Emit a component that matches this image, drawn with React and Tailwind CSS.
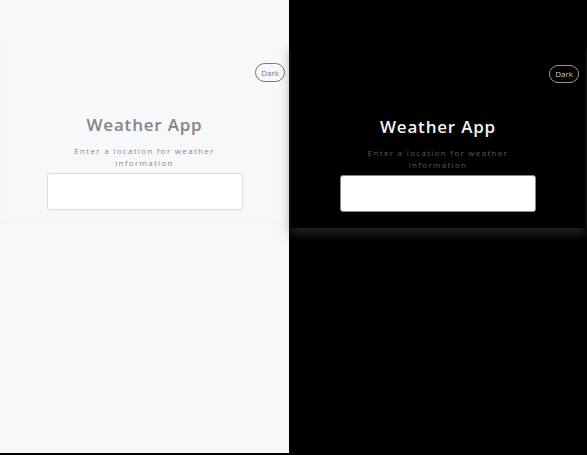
import React from "react";

function Card({ dark }) {
  return (
    <div
      className={
        dark
          ? "mx-[2px] mt-[44px] flex h-[184px] flex-col items-center bg-black px-[6px] pt-[21px] shadow-[0_6px_10px_rgba(70,70,80,0.5)]"
          : "mx-[2px] mt-[40px] flex h-[182px] flex-col items-center bg-[#f8f8fa] px-[2px] pt-[23px] shadow-[0_1px_3px_rgba(0,0,0,0.035)]"
      }
    >
      <div className="flex w-full justify-end">
        <button
          className={
            dark
              ? "h-[18px] w-[30px] rounded-full border border-[#9a9a9a] text-[8px] leading-none text-[#c8c8c8]"
              : "h-[19px] w-[30px] rounded-full border border-[#777] text-[8px] leading-none text-[#777]"
          }
        >
          Dark
        </button>
      </div>
      <h1
        className={
          dark
            ? "mt-[32px] text-[17px] font-semibold leading-[24px] tracking-[0.8px] text-[#f2f2f2]"
            : "mt-[31px] text-[17px] font-semibold leading-[24px] tracking-[0.8px] text-[#858585]"
        }
      >
        Weather App
      </h1>
      <p
        className={
          dark
            ? "mt-[8px] w-[160px] text-center text-[8px] leading-[12px] tracking-[1.3px] text-[#5a5a5a]"
            : "mt-[8px] w-[160px] text-center text-[8px] leading-[12px] tracking-[1.3px] text-[#8a8a8a]"
        }
      >
        Enter a location for weather information
      </p>
      <input
        className={
          dark
            ? "mt-[4px] h-[37px] w-[196px] rounded-[3px] border border-[#888] bg-white outline-none"
            : "mt-[4px] h-[37px] w-[196px] rounded-[2px] border border-[#dcdcdc] bg-white outline-none"
        }
      />
    </div>
  );
}

export default function App() {
  return (
    <div
      className="flex h-[455px] w-[587px] flex-col bg-black"
      style={{ fontFamily: '"Open Sans", "Noto Sans", sans-serif' }}
    >
      <div className="flex h-[453px] w-full">
        <div className="h-full w-[289px] bg-[#f8f8fb]">
          <Card />
        </div>
        <div className="h-full w-[298px] bg-black">
          <Card dark />
        </div>
      </div>
    </div>
  );
}
